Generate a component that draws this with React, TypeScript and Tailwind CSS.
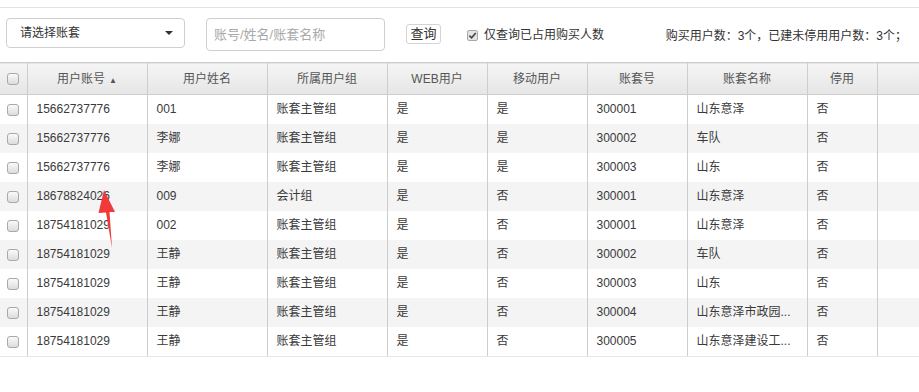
type Row = {
  account: string;
  name: string;
  group: string;
  web: string;
  mobile: string;
  setNo: string;
  setName: string;
  disabled: string;
};

const rows: Row[] = [
  { account: "15662737776", name: "001", group: "账套主管组", web: "是", mobile: "是", setNo: "300001", setName: "山东意泽", disabled: "否" },
  { account: "15662737776", name: "李娜", group: "账套主管组", web: "是", mobile: "是", setNo: "300002", setName: "车队", disabled: "否" },
  { account: "15662737776", name: "李娜", group: "账套主管组", web: "是", mobile: "是", setNo: "300003", setName: "山东", disabled: "否" },
  { account: "18678824026", name: "009", group: "会计组", web: "是", mobile: "否", setNo: "300001", setName: "山东意泽", disabled: "否" },
  { account: "18754181029", name: "002", group: "账套主管组", web: "是", mobile: "否", setNo: "300001", setName: "山东意泽", disabled: "否" },
  { account: "18754181029", name: "王静", group: "账套主管组", web: "是", mobile: "否", setNo: "300002", setName: "车队", disabled: "否" },
  { account: "18754181029", name: "王静", group: "账套主管组", web: "是", mobile: "否", setNo: "300003", setName: "山东", disabled: "否" },
  { account: "18754181029", name: "王静", group: "账套主管组", web: "是", mobile: "否", setNo: "300004", setName: "山东意泽市政园...", disabled: "否" },
  { account: "18754181029", name: "王静", group: "账套主管组", web: "是", mobile: "否", setNo: "300005", setName: "山东意泽建设工...", disabled: "否" },
];

const headers = ["用户账号", "用户姓名", "所属用户组", "WEB用户", "移动用户", "账套号", "账套名称", "停用"];
const widths = ["w-[120px]", "w-[120px]", "w-[120px]", "w-[100px]", "w-[100px]", "w-[100px]", "w-[120px]", "w-[70px]"];

const Box = () => (
  <span className="inline-block h-[12px] w-[12px] rounded-[3px] border border-[#a9a9a9] bg-gradient-to-b from-[#fafafa] to-[#dcdcdc] align-middle" />
);

const App = () => {
  return (
    <div
      className="relative h-[392px] w-[919px] overflow-hidden bg-white text-[12px] text-[#333]"
      style={{ fontFamily: '"Liberation Sans", "Noto Sans CJK SC", sans-serif' }}
    >
      <div className="mt-[7px] border-t border-[#e2e2e2]" />

      {/* Toolbar */}
      <div className="flex h-[54px] items-start pl-[6px] pt-[10px]">
        <div className="flex h-[30px] w-[179px] items-center justify-between rounded-[4px] border border-[#cfcfcf] pl-[13px] pr-[11px] text-[12px] text-[#333]">
          <span>请选择账套</span>
          <span className="h-0 w-0 border-x-[4px] border-t-[4px] border-x-transparent border-t-[#333]" />
        </div>
        <div className="ml-[21px] flex h-[33px] w-[179px] items-center rounded-[4px] border border-[#cfcfcf] pl-[7px] text-[13px] text-[#a9a9a9]">
          账号/姓名/账套名称
        </div>
        <div className="ml-[21px] mt-[6px] flex h-[20px] w-[35px] items-center justify-center rounded-[3px] border border-[#d4d4d4] bg-white text-[13px] text-[#333]">
          查询
        </div>
        <label className="ml-[26px] mt-[8px] flex items-center gap-[6px] text-[12px] text-[#333]">
          <span className="flex h-[11px] w-[11px] items-center justify-center rounded-[2px] border border-[#a9a9a9] bg-[#e4e4e4]">
            <svg viewBox="0 0 10 10" className="h-[9px] w-[9px]">
              <path d="M1.5 5.2 L4 7.6 L8.6 2.2" fill="none" stroke="#444" strokeWidth="1.8" />
            </svg>
          </span>
          仅查询已占用购买人数
        </label>
        <div className="ml-auto mr-[12px] mt-[9px] text-[12px] text-[#333]">
          购买用户数：3个，已建未停用用户数：3个；
        </div>
      </div>

      {/* Table */}
      <table className="w-[919px] table-fixed border-collapse">
        <thead>
          <tr className="h-[32px] border-y border-[#cdcdcd] bg-gradient-to-b from-[#f5f5f5] to-[#e6e6e6] text-[#555]">
            <th className="w-[27px] border-r border-[#cdcdcd] p-0 text-center font-normal">
              <Box />
            </th>
            {headers.map((h, i) => (
              <th
                key={h}
                className={`${widths[i]} border-r border-[#cdcdcd] p-0 text-center text-[12px] font-normal`}
              >
                {h}
                {i === 0 && <span className="ml-[4px] text-[8px] text-[#555]">▲</span>}
              </th>
            ))}
            <th className="p-0" />
          </tr>
        </thead>
        <tbody>
          {rows.map((r, idx) => (
            <tr key={idx} className={`h-[29px] ${idx % 2 === 1 ? "bg-[#f4f4f4]" : "bg-white"}`}>
              <td className="border-r border-[#cdcdcd] p-0 text-center">
                <Box />
              </td>
              {[r.account, r.name, r.group, r.web, r.mobile, r.setNo, r.setName, r.disabled].map((c, i) => (
                <td
                  key={i}
                  className="whitespace-nowrap border-r border-[#cdcdcd] py-0 pl-[9px] pr-[4px] text-[12px] text-[#3a3a3a]"
                >
                  {c}
                </td>
              ))}
              <td className="p-0" />
            </tr>
          ))}
        </tbody>
      </table>
      <div className="border-t border-[#e6e6e6]" />

      {/* Red annotation arrow */}
      <svg className="pointer-events-none absolute left-0 top-0" width="919" height="392">
        <path d="M112 248 L109.5 212 L115 212 L104 190 L98.5 213 L106 212.5 Z" fill="#f03a3a" />
      </svg>
    </div>
  );
};

export default App;
